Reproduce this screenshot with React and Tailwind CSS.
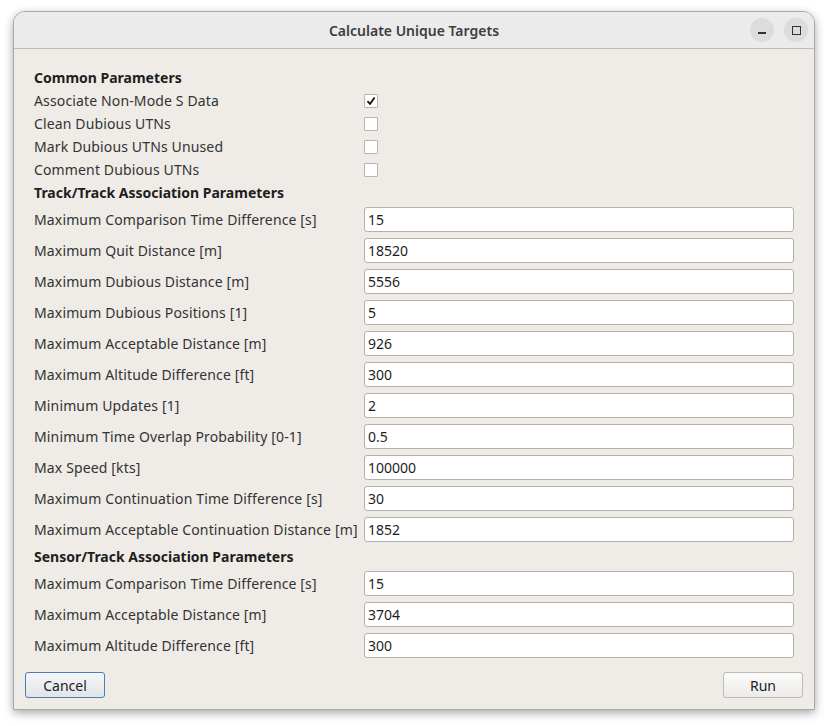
import React from 'react';

const common = [
  { label: 'Associate Non-Mode S Data', checked: true },
  { label: 'Clean Dubious UTNs', checked: false },
  { label: 'Mark Dubious UTNs Unused', checked: false },
  { label: 'Comment Dubious UTNs', checked: false },
];

const trackTrack = [
  ['Maximum Comparison Time Difference [s]', '15'],
  ['Maximum Quit Distance [m]', '18520'],
  ['Maximum Dubious Distance [m]', '5556'],
  ['Maximum Dubious Positions [1]', '5'],
  ['Maximum Acceptable Distance [m]', '926'],
  ['Maximum Altitude Difference [ft]', '300'],
  ['Minimum Updates [1]', '2'],
  ['Minimum Time Overlap Probability [0-1]', '0.5'],
  ['Max Speed [kts]', '100000'],
  ['Maximum Continuation Time Difference [s]', '30'],
  ['Maximum Acceptable Continuation Distance [m]', '1852'],
];

const sensorTrack = [
  ['Maximum Comparison Time Difference [s]', '15'],
  ['Maximum Acceptable Distance [m]', '3704'],
  ['Maximum Altitude Difference [ft]', '300'],
];

function Heading({ children, className = '' }) {
  return (
    <div className={`h-[23px] flex items-center font-bold text-[#1e1e1e] ${className}`}>
      {children}
    </div>
  );
}

function CheckRow({ label, checked }) {
  return (
    <div className="h-[23px] grid grid-cols-[330px_1fr] items-center">
      <span className="tracking-[0.14px]">{label}</span>
      <span className="w-[14px] h-[14px] bg-white border border-[#b9b6b2] rounded-[1px] flex items-center justify-center">
        {checked && (
          <svg width="10" height="10" viewBox="0 0 10 10">
            <path d="M1.5 5.2 L4 8 L8.6 1.5" fill="none" stroke="#111" strokeWidth="1.8" strokeLinejoin="round" />
          </svg>
        )}
      </span>
    </div>
  );
}

function InputRow({ label, value, className = '' }) {
  return (
    <div className={`h-[25px] grid grid-cols-[330px_1fr] items-center ${className}`}>
      <span className="tracking-[0.14px]">{label}</span>
      <div className="h-[25px] bg-white border border-[#b4b1ad] rounded-[3px] flex items-center px-[3px] text-[#1e1e1e]">
        {value}
      </div>
    </div>
  );
}

function Rows({ items }) {
  return (
    <div className="flex flex-col gap-[6px] my-[3px]">
      {items.map(([l, v], i) => (
        <InputRow key={i} label={l} value={v} />
      ))}
    </div>
  );
}

export default function App() {
  return (
    <div className="w-[828px] h-[726px] bg-white pt-[11px] pl-[13px]" style={{ fontFamily: '"Noto Sans", "Open Sans", sans-serif' }}>
      <div className="w-[802px] h-[699px] flex flex-col rounded-t-[12px] border border-[#a9a9a9] shadow-[0_3px_10px_rgba(0,0,0,0.35)] overflow-hidden bg-[#efebe7]">
        <div className="h-[37px] shrink-0 bg-[#ebebeb] border-b border-[#bdbdbd] relative flex items-center justify-center">
          <span className="text-[14px] font-semibold text-[#3d3d3d]">Calculate Unique Targets</span>
          <div className="absolute right-[6px] top-[6px] flex gap-[10px]">
            <div className="w-[24px] h-[24px] rounded-full bg-[#dcdcdc] flex items-center justify-center">
              <div className="w-[8px] h-[1.5px] bg-[#333] mt-[6px]" />
            </div>
            <div className="w-[24px] h-[24px] rounded-full bg-[#dcdcdc] flex items-center justify-center">
              <div className="w-[9px] h-[9px] border-[1.5px] border-[#333]" />
            </div>
          </div>
        </div>
        <div className="flex-1 flex flex-col px-[20px] pt-[17px] text-[14px] text-[#333]">
          <Heading>Common Parameters</Heading>
          {common.map((c, i) => (
            <CheckRow key={i} label={c.label} checked={c.checked} />
          ))}
          <Heading>Track/Track Association Parameters</Heading>
          <Rows items={trackTrack} />
          <Heading>Sensor/Track Association Parameters</Heading>
          <Rows items={sensorTrack} />
          <div className="flex justify-between mt-auto mb-[11px] -mx-[9px]">
            <button className="w-[80px] h-[26px] rounded-[3px] border border-[#4a7fb5] bg-gradient-to-b from-[#f5f6f7] to-[#e2e5e8] text-[#222]">
              Cancel
            </button>
            <button className="w-[80px] h-[26px] rounded-[3px] border border-[#bcbab6] bg-gradient-to-b from-[#fbfbfa] to-[#ecebe9] text-[#222]">
              Run
            </button>
          </div>
        </div>
      </div>
    </div>
  );
}
